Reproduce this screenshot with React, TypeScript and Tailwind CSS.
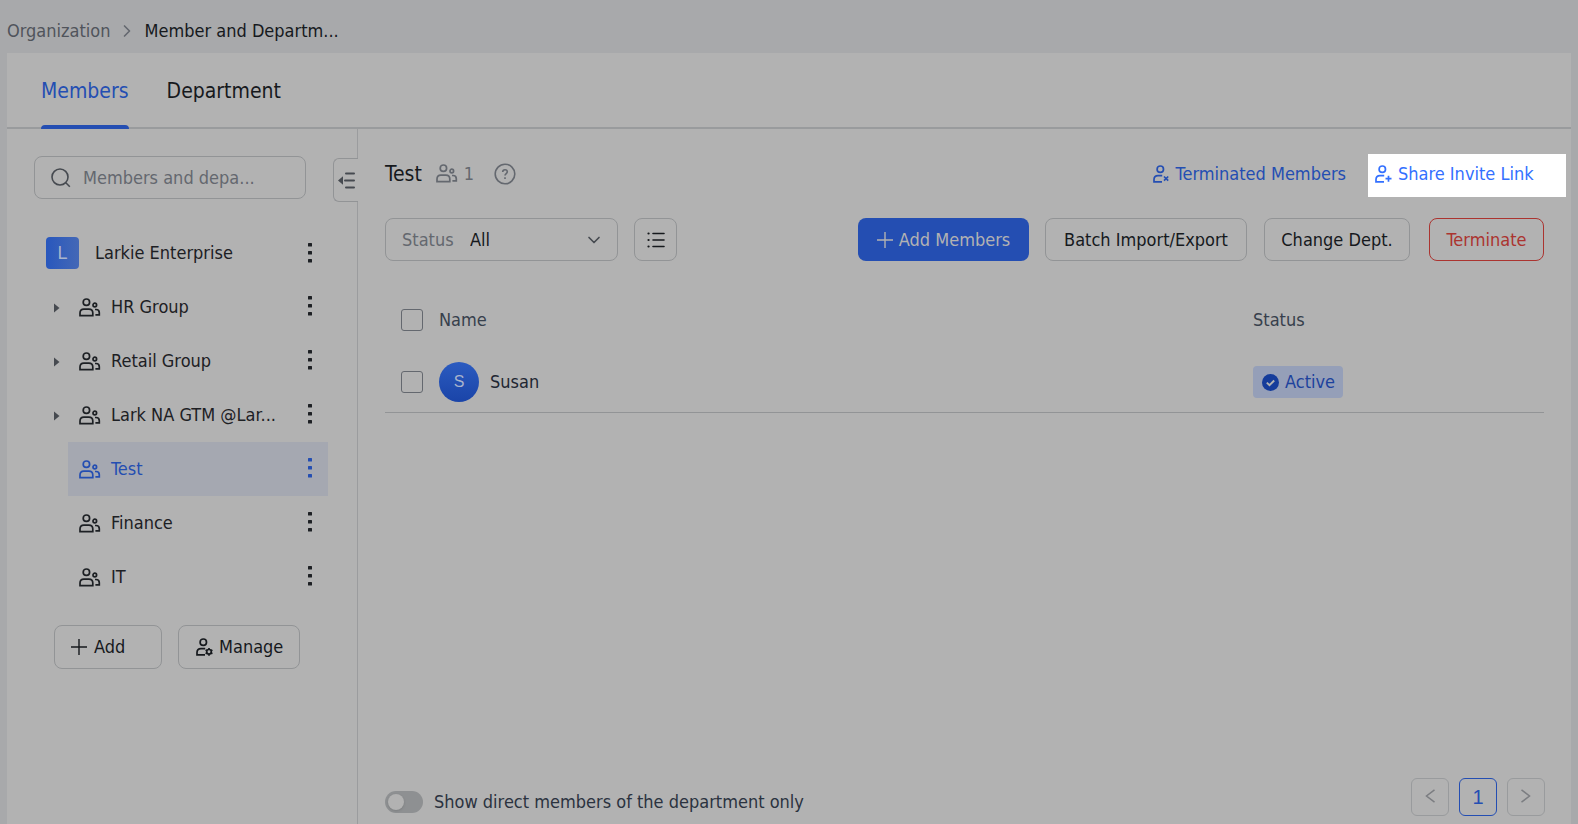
import { useState } from 'react';
import type { ReactNode } from 'react';
import { ChevronDown, ChevronRight } from 'lucide-react';

const departments = [
  { name: 'HR Group', expandable: true },
  { name: 'Retail Group', expandable: true },
  { name: 'Lark NA GTM @Lar...', expandable: true },
  { name: 'Test', expandable: false },
  { name: 'Finance', expandable: false },
  { name: 'IT', expandable: false },
];

function GroupIcon() {
  return (
    <svg width="22" height="19" viewBox="0 0 22 19" fill="none" stroke="currentColor" strokeWidth="1.7" className="shrink-0">
      <circle cx="7.4" cy="4.2" r="3.2" />
      <circle cx="15.8" cy="7" r="1.8" />
      <path d="M1 17.6v-2.600c0-2.300 1.600-3.900 3.900-3.900h5c2.300 0 3.900 1.600 3.900 3.900v2.600z" />
      <path d="M16 11.500h1c2 0 3.300 1.300 3.300 3.200v2.100H16.400" />
    </svg>
  );
}

function PersonIcon({ children }: { children: ReactNode }) {
  return (
    <svg width="17" height="18" viewBox="0 0 17 18" fill="none" stroke="currentColor" strokeWidth="1.7" className="shrink-0">
      <circle cx="7.300" cy="4.200" r="3.200" />
      <path d="M9.200 10.600H5C2.500 10.600 1 12.200 1 14.600v2.200h8" />
      {children}
    </svg>
  );
}

function PlusIcon() {
  return (
    <svg width="16" height="16" viewBox="0 0 16 16" stroke="currentColor" strokeWidth="1.400" className="shrink-0">
      <path d="M8 0v16M0 8h16" />
    </svg>
  );
}

function MoreButton({ label }: { label: string }) {
  return (
    <button aria-label={label} className="flex h-8 w-4 shrink-0 items-center justify-center pb-px">
      <svg width="4" height="20" viewBox="0 0 4 20" fill="currentColor">
        <rect width="4" height="3.500" rx="0.500" />
        <rect y="8" width="4" height="3.500" rx="0.500" />
        <rect y="16" width="4" height="3.500" rx="0.500" />
      </svg>
    </button>
  );
}

function Checkbox({ label }: { label: string }) {
  return (
    <input
      type="checkbox"
      aria-label={label}
      className="block size-[22px] appearance-none rounded-[3px] border border-[#64686f] checked:bg-[#244eb2]"
    />
  );
}

function Sidebar() {
  const [selected, setSelected] = useState('Test');

  return (
    <aside className="relative w-[351px] shrink-0 border-r border-[#9b9c9e] pt-[27px]">
      <label className="ml-[27px] flex h-[43px] w-[272px] items-center gap-3 rounded-lg border border-[#929496] pl-4 pr-10 text-[#464a50]">
        <svg width="20" height="20" viewBox="0 0 20 20" fill="none" stroke="currentColor" strokeWidth="1.600" className="shrink-0">
          <circle cx="9" cy="9" r="8" />
          <path d="M14.800 14.800l4 4" />
        </svg>
        <input
          type="text"
          aria-label="Search members"
          placeholder="Members and depa..."
          className="w-full min-w-0 bg-transparent outline-none placeholder:text-[#64686f]"
        />
      </label>

      <button
        aria-label="Collapse sidebar"
        className="absolute -right-px top-[29px] flex h-11 w-[25px] items-center justify-center rounded-l-md border border-r-0 border-[#929496] bg-[#b2b2b2] text-[#464a50]"
      >
        <svg width="17" height="17" viewBox="0 0 17 17" fill="currentColor">
          <path d="M0 8.500l5-4.200v8.400z" />
          <path d="M8 1.500h8M7 8.500h9M8 15.500h8" stroke="currentColor" strokeWidth="2" strokeLinecap="round" />
        </svg>
      </button>

      <div className="mt-[27px] flex h-[54px] items-center pl-[39px] pr-[39px] text-[#1d2024]">
        <span className="flex h-8 w-[33px] items-center justify-center rounded-sm bg-linear-to-r from-[#2857bd] to-[#4468b6] font-['Liberation_Sans',sans-serif] font-medium text-[#a9b4cc]">
          L
        </span>
        <span className="ml-4 flex-1">Larkie Enterprise</span>
        <MoreButton label="Larkie Enterprise options" />
      </div>

      <ul>
        {departments.map((dept) => (
          <li key={dept.name} className="flex h-[54px] items-center pr-[29px]">
            <span className="w-[61px] shrink-0 pl-[47px] text-[#464a50]">
              {dept.expandable && (
                <button aria-label={`Expand ${dept.name}`} className="block pt-0.5">
                  <svg width="6" height="10" viewBox="0 0 6 10" fill="currentColor">
                    <path d="M0 0.500l5.500 4.500L0 9.500z" />
                  </svg>
                </button>
              )}
            </span>
            <div
              className={`flex h-full min-w-0 flex-1 items-center pl-[11px] pr-[10px] ${
                dept.name === selected ? 'bg-[#a5a8b1] text-[#244eb2]' : 'text-[#1d2024]'
              }`}
            >
              <button onClick={() => setSelected(dept.name)} className="flex w-[208px] items-center gap-[10px] text-left">
                <GroupIcon />
                <span className="whitespace-nowrap">{dept.name}</span>
              </button>
              <span className="ml-auto flex pb-px">
                <MoreButton label={`${dept.name} options`} />
              </span>
            </div>
          </li>
        ))}
      </ul>

      <div className="mt-[21px] flex gap-4 pl-[47px]">
        <button className="flex h-11 w-[108px] items-center gap-[7px] rounded-lg border border-[#929496] pl-4">
          <PlusIcon />
          Add
        </button>
        <button className="flex h-11 w-[122px] items-center gap-1.5 rounded-lg border border-[#929496] pl-[17px]">
          <PersonIcon>
            <circle cx="13" cy="13.800" r="2.300" />
            <path d="M13 9.900v1.300M13 16.400v1.300M9.600 11.900l1.200.7M15.200 15l1.200.7M9.600 15.700l1.200-.7M15.200 12.600l1.200-.7" />
          </PersonIcon>
          Manage
        </button>
      </div>
    </aside>
  );
}

function MembersPanel() {
  const [directOnly, setDirectOnly] = useState(false);

  return (
    <section className="flex min-w-0 flex-1 flex-col px-[27px] pb-2 pt-[25px]">
      <div className="flex h-[43px] items-center">
        <h1 className="pb-0.5 text-[21px]">Test</h1>
        <span className="ml-[14px] flex items-center gap-1.5 pb-1 text-[#64686f]">
          <GroupIcon />1
        </span>
        <button aria-label="Help" className="ml-5 pb-1 text-[#64686f]">
          <svg width="22" height="22" viewBox="0 0 22 22" fill="none" stroke="currentColor" strokeWidth="1.600" className="block">
            <circle cx="11" cy="11" r="9.800" />
            <path d="M8.700 9c0-1.400 1-2.300 2.300-2.300s2.300.9 2.300 2.100c0 1.700-2.300 1.800-2.300 3.800" />
            <path d="M11 14.200v1.700" />
          </svg>
        </button>
        <a href="#terminated" className="ml-auto flex items-center gap-1.5 pb-1 text-[#244eb2]">
          <PersonIcon>
            <path d="M11 11.500l4.200 4.200M15.200 11.500L11 15.700" />
          </PersonIcon>
          Terminated Members
        </a>
        <a
          href="#invite"
          className="-mr-[22px] ml-[22px] flex h-[43px] w-[198px] items-center gap-1.5 bg-white pb-1 pl-[7px] text-[#3370ff]"
        >
          <PersonIcon>
            <path d="M13.500 10.700v6M10.500 13.700h6" />
          </PersonIcon>
          Share Invite Link
        </a>
      </div>

      <div className="mt-[21px] flex items-center">
        <label className="flex h-[43px] w-[233px] items-center rounded-lg border border-[#929496] pl-4 pr-[13px]">
          <span className="w-[68px] text-[#64686f]">Status</span>
          <select className="flex-1 appearance-none bg-transparent outline-none">
            <option>All</option>
            <option>Active</option>
          </select>
          <ChevronDown size={20} className="text-[#464a50]" />
        </label>
        <button
          aria-label="Column settings"
          className="ml-4 flex size-[43px] items-center justify-center rounded-lg border border-[#929496]"
        >
          <svg width="18" height="16" viewBox="0 0 18 16" stroke="currentColor" strokeWidth="1.600" strokeLinecap="round">
            <path d="M6 1.500h11M6 8h11M6 14.500h11" />
            <path d="M1.500 1.500h.1M1.500 8h.1M1.500 14.500h.1" strokeWidth="2.200" />
          </svg>
        </button>
        <div className="ml-auto flex gap-4">
          <button className="flex h-[43px] w-[171px] items-center justify-center gap-1.5 rounded-lg bg-[#244eb2] text-[#b2b2b2]">
            <PlusIcon />
            Add Members
          </button>
          <button className="h-[43px] w-[202px] rounded-lg border border-[#929496]">Batch Import/Export</button>
          <button className="ml-px h-[43px] w-[146px] rounded-lg border border-[#929496]">Change Dept.</button>
          <button className="ml-[3px] h-[43px] w-[115px] rounded-lg border border-[#ab3430] text-[#ab3430]">Terminate</button>
        </div>
      </div>

      <table className="mt-7 w-full table-fixed text-left">
        <thead>
          <tr className="h-[62px] text-[#37404c]">
            <th className="w-[54px] pl-4">
              <Checkbox label="Select all" />
            </th>
            <th className="font-normal">Name</th>
            <th className="w-[291px] font-normal">Status</th>
          </tr>
        </thead>
        <tbody>
          <tr className="h-[61px] border-b border-[#929496]">
            <td className="pl-4 pt-0.5">
              <Checkbox label="Select Susan" />
            </td>
            <td className="pt-0.5">
              <span className="flex items-center gap-[11px] text-[#1f2732]">
                <span className="flex size-10 items-center justify-center rounded-full bg-linear-to-b from-[#2b5bc0] to-[#1a44a8] font-['Liberation_Sans',sans-serif] text-base font-medium text-[#a9b4cc]">
                  S
                </span>
                Susan
              </span>
            </td>
            <td className="pt-0.5">
              <span className="flex h-8 w-[90px] items-center gap-1.5 rounded bg-[#959fb8] pl-[9px] text-[#1d429d]">
                <svg width="17" height="17" viewBox="0 0 17 17" className="shrink-0">
                  <circle cx="8.500" cy="8.500" r="8.500" fill="#153c9b" />
                  <path d="M4.800 8.600l2.700 2.600 4.700-4.700" fill="none" stroke="#b2b2b2" strokeWidth="1.900" />
                </svg>
                Active
              </span>
            </td>
          </tr>
        </tbody>
      </table>

      <div className="mt-auto flex items-center justify-between">
        <label className="flex items-center gap-[11px] pt-2.5 text-[#2b3340]">
          <input
            type="checkbox"
            role="switch"
            checked={directOnly}
            onChange={(e) => setDirectOnly(e.target.checked)}
            className="h-[22px] w-[38px] appearance-none rounded-full bg-[#8e9092] p-[3px] before:block before:size-4 before:rounded-full before:bg-[#b2b2b2] before:shadow-sm checked:bg-[#244eb2] checked:before:ml-4"
          />
          Show direct members of the department only
        </label>
        <nav aria-label="Pagination" className="-mr-px flex gap-[10px] text-[#7b7d81]">
          <button aria-label="Previous page" className="flex size-[38px] items-center justify-center rounded-md border border-[#999b9d] pb-0.5">
            <svg width="10" height="14" viewBox="0 0 10 14" fill="none" stroke="currentColor" strokeWidth="1.500">
              <path d="M9.500 0.800L1.500 7l8 6.200" />
            </svg>
          </button>
          <button className="size-[38px] rounded-md border border-[#244eb2] font-['Liberation_Sans',sans-serif] text-xl text-[#244eb2]">
            1
          </button>
          <button aria-label="Next page" className="flex size-[38px] items-center justify-center rounded-md border border-[#999b9d] pb-0.5">
            <svg width="10" height="14" viewBox="0 0 10 14" fill="none" stroke="currentColor" strokeWidth="1.500">
              <path d="M0.500 0.800L8.500 7l-8 6.200" />
            </svg>
          </button>
        </nav>
      </div>
    </section>
  );
}

export default function App() {
  return (
    <div className="flex min-h-screen flex-col bg-[#a8a9ab] px-[7px] font-['DejaVu_Sans_Condensed','DejaVu_Sans',sans-serif] text-lg text-[#16191d]">
      <nav aria-label="Breadcrumb" className="flex h-[53px] items-center pt-2">
        <a href="#organization" className="text-[#50545b]">Organization</a>
        <ChevronRight size={20} className="ml-1.5 mr-2 text-[#64686f]" />
        <span>Member and Departm...</span>
      </nav>

      <main className="flex flex-1 flex-col bg-[#b2b2b2]">
        <div className="flex h-[76px] gap-[38px] border-b-2 border-[#999b9d] pl-[34px] text-[21px]">
          <button className="relative flex items-center pt-0.5 text-[#244eb2]">
            Members
            <span className="absolute inset-x-0 -bottom-0.5 h-1 rounded-t-sm bg-[#244eb2]" />
          </button>
          <button className="flex items-center pt-0.5">Department</button>
        </div>
        <div className="flex flex-1">
          <Sidebar />
          <MembersPanel />
        </div>
      </main>
    </div>
  );
}
